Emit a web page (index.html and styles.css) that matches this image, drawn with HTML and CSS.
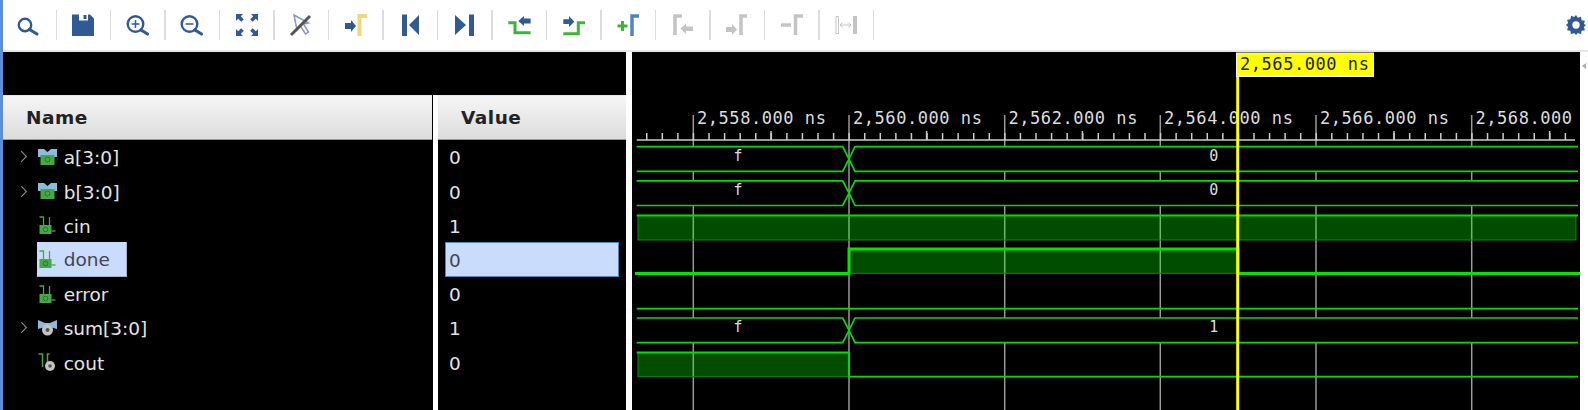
FILE: index.html
```html
<!DOCTYPE html>
<html lang="en">
  <head>
    <meta charset="UTF-8" />
    <title>Waveform</title>
    <link rel="stylesheet" href="styles.css">
  </head>
  <body>
    <!-- shared signal icons -->
    <svg class="sprites">
      <symbol id="bus-in" viewBox="0 0 19 16">
        <path d="M0 0h6l3.500 3 3.500-3h6v8H0z" fill="#8dbbdc" />
        <rect x="2.500" y="6" width="14" height="10" fill="#46a846" />
        <circle cx="9.500" cy="10.500" r="2.500" fill="none" stroke="#25782a" />
      </symbol>
      <symbol id="bus-out" viewBox="0 0 19 16">
        <path d="M0 0l7 3h5l7-3v9l-7-2H7L0 9z" fill="#8dbbdc" />
        <circle cx="9.500" cy="10" r="5.500" fill="#c4c4c4" />
        <circle cx="9.500" cy="10" r="2" fill="#555" />
      </symbol>
      <symbol id="bit-in" viewBox="0 0 18 18">
        <path d="M1 1h4v9M11 1v9" fill="none" stroke="#46a846" stroke-width="1.300" />
        <rect x="1" y="9" width="12" height="9" fill="#46a846" />
        <path d="M13 15h4" stroke="#46a846" stroke-width="1.300" />
        <circle cx="7" cy="13.500" r="2.300" fill="none" stroke="#25782a" />
      </symbol>
      <symbol id="bit-out" viewBox="0 0 18 18">
        <path d="M0 1h4v13M9 13V1h2" fill="none" stroke="#46a846" stroke-width="1.500" />
        <circle cx="11.500" cy="13" r="5" fill="#c4c4c4" />
        <circle cx="11.500" cy="13" r="1.800" fill="#555" />
      </symbol>
    </svg>

    <div class="app">
      <div class="toolbar">
        <div class="tool first">
          <svg viewBox="0 0 24 24"><circle cx="9" cy="12" r="6.200" class="ring" /><path d="M13.500 16.500l7.500 4.500" class="handle" /></svg>
        </div>
        <div class="sep"></div>
        <div class="tool">
          <svg viewBox="0 0 24 24"><path d="M1 1.500h7v6h9v-6h2l4 4V23H1z" class="blue" /><path d="M12.500 2h3v4h-3z" class="blue" /></svg>
        </div>
        <div class="sep"></div>
        <div class="tool">
          <svg viewBox="0 0 24 24"><circle cx="9.500" cy="11" r="7.800" class="ring" /><path d="M15 17l6.500 4" class="handle" /><path d="M5.500 11h8M9.500 7v8" class="thin" /></svg>
        </div>
        <div class="sep"></div>
        <div class="tool">
          <svg viewBox="0 0 24 24"><circle cx="9.500" cy="11" r="7.800" class="ring" /><path d="M15 17l6.500 4" class="handle" /><path d="M5.500 11h8" class="thin" /></svg>
        </div>
        <div class="sep"></div>
        <div class="tool">
          <svg viewBox="0 0 24 24">
            <path d="M1 1h7L5.800 3.200l3 3-2.600 2.600-3-3L1 8z" class="blue" />
            <path d="M23 1h-7l2.200 2.200-3 3 2.600 2.600 3-3L23 8z" class="blue" />
            <path d="M1 23h7l-2.200-2.200 3-3-2.600-2.600-3 3L1 16z" class="blue" />
            <path d="M23 23h-7l2.200-2.200-3-3 2.600-2.600 3 3L23 16z" class="blue" />
          </svg>
        </div>
        <div class="sep"></div>
        <div class="tool">
          <svg viewBox="0 0 24 24"><path d="M5 2l3 15 3.500-4 5 8 3-2-5-8 5-1z" fill="none" stroke="#7f9cc6" stroke-width="1.500" /><path d="M2 22L21 3" stroke="#555" stroke-width="3" /></svg>
        </div>
        <div class="sep"></div>
        <div class="tool">
          <svg viewBox="0 0 24 24"><path d="M1 10h6V7l5 6-5 6v-3H1z" class="blue" /><path d="M15.500 23V3H23" class="gold" /></svg>
        </div>
        <div class="sep"></div>
        <div class="tool">
          <svg viewBox="0 0 24 24"><path d="M4 1.500h5V23H4zM21 2v20L11 12z" class="blue" /></svg>
        </div>
        <div class="sep"></div>
        <div class="tool">
          <svg viewBox="0 0 24 24"><path d="M2 2v20l11-10zM16 1.500h5V23h-5z" class="blue" /></svg>
        </div>
        <div class="sep"></div>
        <div class="tool">
          <svg viewBox="0 0 24 24"><path d="M1.300 9.700H8v10h15.600" class="green" /><path d="M11.300 8L17 3v2.500h6.600v5H17V13z" class="blue" /></svg>
        </div>
        <div class="sep"></div>
        <div class="tool">
          <svg viewBox="0 0 24 24"><path d="M1.300 20.700h15v-11H23" class="green" /><path d="M1.300 6.200H7V3l5.300 5.700L7 14v-3H1.300z" class="blue" /></svg>
        </div>
        <div class="sep"></div>
        <div class="tool">
          <svg viewBox="0 0 24 24"><path d="M1.500 13h10M6.500 8v10" class="green" /><path d="M16 23V3h7" class="sky" /></svg>
        </div>
        <div class="sep"></div>
        <div class="tool">
          <svg viewBox="0 0 24 24"><path d="M4 22V3h7" class="off" /><path d="M9.500 15.500l5.500-5v3h7v4.500h-7v3z" class="off-fill" /></svg>
        </div>
        <div class="sep"></div>
        <div class="tool">
          <svg viewBox="0 0 24 24"><path d="M1 14h6v-3l5 5.500L7 22v-3H1z" class="off-fill" /><path d="M16 22V3h6" class="off" /></svg>
        </div>
        <div class="sep"></div>
        <div class="tool">
          <svg viewBox="0 0 24 24"><path d="M1 12h10" class="off" /><path d="M15.500 22V3H23" class="off" /></svg>
        </div>
        <div class="sep"></div>
        <div class="tool">
          <svg viewBox="0 0 24 24"><path d="M2 3.500h2.500v17H2z" fill="none" stroke="#c4c4c4" /><path d="M19 3h4v18h-4z" class="off-fill" /><path d="M6 12h11M8.500 9.500L6 12l2.500 2.500M14.500 9.500L17 12l-2.500 2.500" fill="none" stroke="#c4c4c4" /></svg>
        </div>
        <div class="sep"></div>
        <div class="gear">
          <svg viewBox="0 0 24 24">
            <path d="M12 1l2 3.200 3.500-1.200.6 3.700 3.700.6-1.200 3.500L23 12l-2.400 2.200 1.200 3.500-3.700.6-.6 3.700-3.500-1.200L12 23l-2-2.200-3.500 1.200-.6-3.700-3.700-.6 1.200-3.500L1 12l2.400-2.200-1.200-3.500 3.700-.6.6-3.700L10 3.200z" class="blue" />
            <circle cx="12" cy="12" r="4" fill="#fff" />
          </svg>
        </div>
      </div>

      <div class="main">
        <div class="signals">
          <div class="signals-top"></div>
          <div class="columns">
            <div class="col-name">
              <div class="col-head">Name</div>
              <div class="row"><span class="chevron"></span><span class="entry"><svg class="sig"><use href="#bus-in" /></svg><span>a[3:0]</span></span></div>
              <div class="row"><span class="chevron"></span><span class="entry"><svg class="sig"><use href="#bus-in" /></svg><span>b[3:0]</span></span></div>
              <div class="row"><span class="no-chevron"></span><span class="entry"><svg class="sig"><use href="#bit-in" /></svg><span>cin</span></span></div>
              <div class="row"><span class="no-chevron"></span><span class="entry selected"><svg class="sig"><use href="#bit-in" /></svg><span>done</span></span></div>
              <div class="row"><span class="no-chevron"></span><span class="entry"><svg class="sig"><use href="#bit-in" /></svg><span>error</span></span></div>
              <div class="row"><span class="chevron"></span><span class="entry"><svg class="sig"><use href="#bus-out" /></svg><span>sum[3:0]</span></span></div>
              <div class="row"><span class="no-chevron"></span><span class="entry"><svg class="sig"><use href="#bit-out" /></svg><span>cout</span></span></div>
            </div>
            <div class="col-value">
              <div class="col-head">Value</div>
              <div class="row val">0</div>
              <div class="row val">0</div>
              <div class="row val">1</div>
              <div class="row val val-selected">0</div>
              <div class="row val">0</div>
              <div class="row val">1</div>
              <div class="row val">0</div>
            </div>
          </div>
        </div>

        <!-- wave area: the viewBox uses page coordinates -->
        <svg class="waves" viewBox="632 52 948 358">
          <defs>
            <g id="bus">
              <path d="M636.700 0H842.700L849 12.300 842.700 24.600H636.700" class="bus" />
              <path d="M1578 0H855L849 12.300 855 24.600H1578" class="bus" />
            </g>
          </defs>

          <path d="M693.300 115V410M849 115V410M1004.700 115V410M1160.300 115V410M1316 115V410M1471.700 115V410" class="grid" />

          <path d="M636.700 140H1575" class="axis" />
          <line x1="646" y1="136.500" x2="1575" y2="136.500" class="minor" />
          <path d="M771 131V140M926.600 131V140M1082.400 131V140M1394 131V140M1549.600 131V140" class="axis" />

          <text x="697" y="124" class="time">2,558.000 ns</text>
          <text x="853" y="124" class="time">2,560.000 ns</text>
          <text x="1008.500" y="124" class="time">2,562.000 ns</text>
          <text x="1164" y="124" class="time">2,564.000 ns</text>
          <text x="1320" y="124" class="time">2,566.000 ns</text>
          <text x="1475.500" y="124" class="time">2,568.000</text>

          <!-- a, b -->
          <use href="#bus" y="146.700" />
          <use href="#bus" y="180.900" />
          <text x="738" y="161" class="bus-val">f</text>
          <text x="1213.700" y="161" class="bus-val">0</text>
          <text x="738" y="195" class="bus-val">f</text>
          <text x="1213.700" y="195" class="bus-val">0</text>

          <!-- cin -->
          <rect x="638" y="215.500" width="938" height="24.500" class="high" />
          <path d="M636.700 215.500H1578" class="wire" />

          <!-- done -->
          <rect x="849" y="249" width="389" height="24.300" class="high" />
          <path d="M635 273.500H849V249H1238V273.500H1580" class="wire-bold" />

          <!-- error -->
          <path d="M636.700 308.700H1578" class="wire" />

          <!-- sum -->
          <use href="#bus" y="318" />
          <text x="738" y="332" class="bus-val">f</text>
          <text x="1213.700" y="332" class="bus-val">1</text>

          <!-- cout -->
          <rect x="638" y="352.500" width="211" height="24.200" class="high" />
          <path d="M636.700 352.500H849V376.700H1578" class="wire" />

          <!-- cursor -->
          <path d="M1237.700 76V410" class="cursor" />
          <rect x="1236.500" y="53" width="137" height="23.500" class="cursor-box" />
          <text x="1240" y="69.500" class="time cursor-text">2,565.000 ns</text>
        </svg>

        <div class="strip"><span class="collapse"></span></div>
      </div>
    </div>
  </body>
</html>
```

FILE: styles.css
```css
html,
body {
  margin: 0;
  height: 100%;
  overflow: hidden;
  background-color: #fff;
}

.sprites {
  display: none;
}

.app {
  width: 1585px;
  height: 410px;
  border-left: 3px solid #5a8fe0;
  display: flex;
  flex-direction: column;
  font-family: "DejaVu Sans", sans-serif;
}

/* toolbar */
.toolbar {
  height: 50px;
  flex: none;
  display: flex;
  align-items: center;
  border-bottom: 2px solid #e6e6e6;
}

.tool {
  width: 52.97px;
  height: 24px;
  flex: none;
  display: flex;
  justify-content: center;
}

.tool.first {
  width: 52.5px;
  padding-right: 2.5px;
  box-sizing: border-box;
}

.tool svg {
  width: 24px;
  height: 24px;
}

.sep {
  width: 1.5px;
  height: 30px;
  flex: none;
  background-color: #dcdcdc;
}

.gear {
  margin-left: auto;
  margin-right: 1px;
  width: 22px;
  height: 22px;
}

.gear svg {
  display: block;
  width: 22px;
  height: 22px;
}

.blue {
  fill: #2f5a94;
}

.ring {
  fill: none;
  stroke: #2f5a94;
  stroke-width: 2.4;
}

.handle {
  stroke: #2f5a94;
  stroke-width: 3.2;
  stroke-linecap: round;
}

.thin {
  fill: none;
  stroke: #2f5a94;
  stroke-width: 1.5;
}

.gold {
  fill: none;
  stroke: #ecd97a;
  stroke-width: 4;
}

.green {
  fill: none;
  stroke: #3cb43c;
  stroke-width: 3;
}

.sky {
  fill: none;
  stroke: #4a86c0;
  stroke-width: 3.5;
}

.off {
  fill: none;
  stroke: #c4c4c4;
  stroke-width: 3.5;
}

.off-fill {
  fill: #c4c4c4;
}

/* main area */
.main {
  flex: 1;
  min-height: 0;
  display: flex;
}

.signals {
  width: 622.5px;
  flex: none;
  background-color: #000;
  display: flex;
  flex-direction: column;
}

.signals-top {
  height: 43px;
  flex: none;
}

.columns {
  flex: 1;
  display: flex;
}

.col-name {
  width: 430px;
  flex: none;
  border-right: 5.5px solid #fff;
}

.col-value {
  flex: 1;
}

.col-head {
  height: 44.8px;
  box-sizing: border-box;
  display: flex;
  align-items: center;
  background: linear-gradient(#f6f6f6, #dcdcdc);
  border-top: 1px solid #e8e8e8;
  border-bottom: 1px solid #999;
  color: #222;
  font-size: 18.5px;
  font-weight: bold;
  letter-spacing: 0.5px;
}

.col-name .col-head {
  padding-left: 23px;
  margin-right: 1px;
}

.col-value .col-head {
  padding-left: 23px;
}

.row {
  height: 34.2px;
  display: flex;
  align-items: center;
  color: #e4e4e4;
  font-size: 18.5px;
}

.col-name .row {
  padding-left: 15px;
}

.chevron {
  width: 7px;
  height: 7px;
  margin-right: 11.7px;
  flex: none;
  box-sizing: border-box;
  border-top: 1.5px solid #8a8a8a;
  border-right: 1.5px solid #8a8a8a;
  transform: scale(1.15) rotate(45deg);
}

.no-chevron {
  width: 18.7px;
  flex: none;
}

.entry {
  height: 100%;
  display: flex;
  align-items: center;
  padding-left: 1.5px;
  padding-right: 15.7px;
  box-sizing: border-box;
}

/* label text sits a little under the row centre */
.entry > span {
  padding-top: 2px;
}

.selected {
  background-color: #c9dcfb;
  color: #445;
  border-right: 1px solid #9fb0c8;
  border-bottom: 1px solid #9fb0c8;
}

.sig {
  width: 19px;
  height: 18px;
  margin-right: 6.5px;
  flex: none;
}

.val {
  padding-left: 11px;
  padding-top: 2px;
  box-sizing: border-box;
}

.val-selected {
  margin: 0 6.5px;
  padding-left: 3.5px;
  background-color: #c9dcfb;
  border: 1px solid #4a8ac0;
  color: #445;
}

/* waves */
.waves {
  width: 948px;
  height: 358px;
  margin-left: 6.5px;
  flex: none;
  background-color: #000;
}

.grid {
  fill: none;
  stroke: #999;
  stroke-width: 1.5;
}

.axis {
  fill: none;
  stroke: #ccc;
  stroke-width: 1.5;
}

.minor {
  stroke: #ccc;
  stroke-width: 7;
  stroke-dasharray: 1.5 14.07;
}

.time,
.bus-val {
  font-family: "DejaVu Sans Mono", monospace;
  fill: #ddd;
}

.time {
  font-size: 17px;
  letter-spacing: 0.55px;
}

.bus-val {
  font-size: 15px;
  text-anchor: middle;
}

.bus {
  fill: #000;
  stroke: #00e000;
  stroke-width: 1.7;
}

.wire {
  fill: none;
  stroke: #00e000;
  stroke-width: 1.8;
}

.wire-bold {
  fill: none;
  stroke: #00e600;
  stroke-width: 3;
}

.high {
  fill: rgba(0, 255, 0, 0.3);
  stroke: #0a8a0a;
  stroke-width: 1;
}

.cursor {
  fill: none;
  stroke: #ffff00;
  stroke-width: 3;
}

.cursor-box {
  fill: #ffff00;
  stroke: #f2f2f2;
  stroke-width: 1;
}

.cursor-text {
  fill: #222;
}

/* right edge */
.strip {
  flex: 1;
  display: flex;
  justify-content: center;
  padding-top: 11px;
}

.collapse {
  width: 0;
  height: 0;
  border-top: 3px solid transparent;
  border-bottom: 3px solid transparent;
  border-right: 4px solid #aaa;
}
```
